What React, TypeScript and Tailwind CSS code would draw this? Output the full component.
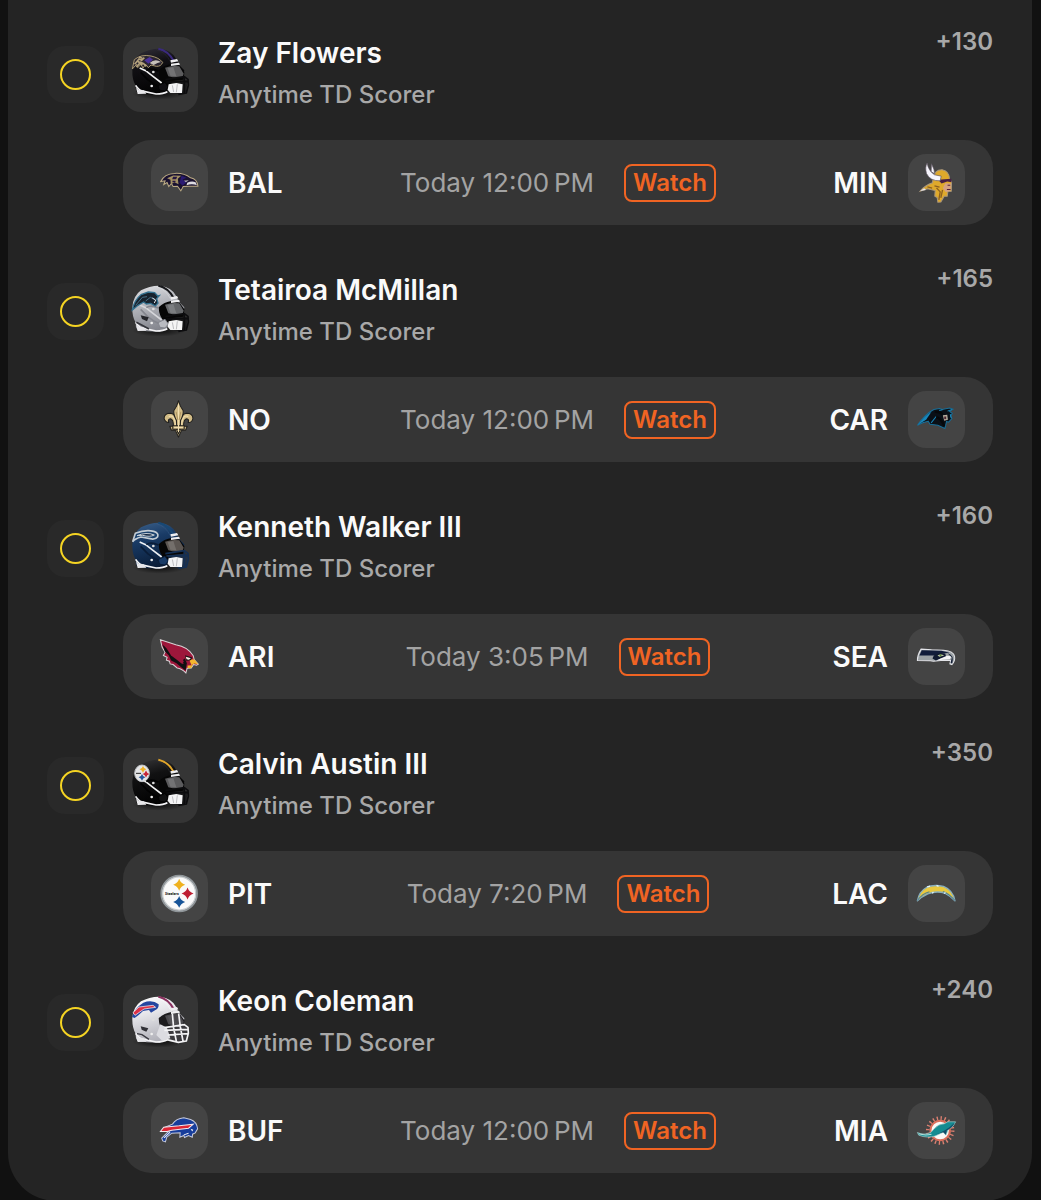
import React from "react";

type HelmetColors = {
  shell: string;
  light: string;
  dark: string;
  mask: string;
  strap: string;
  stripe: string;
  inner: string;
  visor: string;
};

const darkParts = { mask: "#0c0c0e", inner: "#060606", visor: "#5b5b5d" };

function Helmet({ id, colors, open = false, children }: { id: string; colors: HelmetColors; open?: boolean; children?: React.ReactNode }) {
  const c = colors;
  return (
    <svg viewBox="0 0 225 225" className="size-full" aria-hidden="true">
      <defs>
        <linearGradient id={id + "-g"} x1="0" y1="0" x2="0.3" y2="1">
          <stop offset="0" stopColor={c.light} />
          <stop offset="0.4" stopColor={c.shell} />
          <stop offset="1" stopColor={c.dark} />
        </linearGradient>
        <radialGradient id={id + "-s"}>
          <stop offset="0" stopColor="#000" stopOpacity="0.75" />
          <stop offset="1" stopColor="#000" stopOpacity="0" />
        </radialGradient>
      </defs>
      <ellipse cx="108" cy="170" rx="80" ry="18" fill={"url(#" + id + "-s)"} />
      <path d="M43 168 Q37 160 38 146 Q27 128 28 100 Q30 66 54 49 Q80 34 112 35 Q146 40 158 64 L168 84 L184 100 L180 124 L140 124 L132 165 L110 173 L72 172 Z" fill={"url(#" + id + "-g)"} />
      <path d="M106 35 Q136 41 152 72" fill="none" stroke={c.stripe} strokeWidth="6" />
      <path d="M100 38 Q128 45 142 74" fill="none" stroke={c.light} strokeWidth="2" opacity="0.7" />
      <path d="M107 100 Q122 84 148 80 L170 86 L184 106 L182 128 L150 132 L140 150 L126 144 Q108 130 107 100Z" fill={c.inner} />
      <path d="M126 92 Q148 84 169 88 L182 110 L178 121 Q154 124 136 118 Z" fill={c.visor} />
      <path d="M134 94 L151 90 L160 118 L142 116Z" fill="#fff" opacity={open ? "0.05" : "0.15"} />
      <path d="M142 70 L162 66 L166 73 L144 77Z M144 80 L168 77 L171 83 L144 87Z" fill="#eeeef0" />
      {!open && (
        <>
          <path d="M50 93 L68 101 L90 118 L116 138" fill="none" stroke={c.strap} strokeWidth="5" />
          <path d="M70 101 Q84 91 106 102 M53 106 L74 128 L94 142 L118 154" fill="none" stroke={c.dark} strokeWidth="5" />
        </>
      )}
      <path d="M38 145 Q48 162 66 164 L99 171 Q122 170 133 164" fill="none" stroke="#f3f3f5" strokeWidth="5" />
      <path d="M39 152 L48 159 L63 160 L70 170 L44 171Z" fill="#e7e7ea" />
      <circle cx="86" cy="147" r="4" fill="#eee" />
      <circle cx="113" cy="153" r="4" fill="#eee" />
      <circle cx="91" cy="105" r="4" fill="#ddd" />
      <path d="M105 146 L126 136 L136 150 L126 162 L111 160Z" fill={c.shell} stroke={c.dark} strokeWidth="3" />
      {open ? (
        <>
          <path d="M126 126 L192 122 L189 164 L166 173 L140 166Z" fill="#3a393d" />
          <path d="M112 118 L132 128 L142 160 L118 168 L100 150Z" fill="#dcdce1" />
          <path d="M124 128 L184 119 L195 127 L196 145 L190 168 L166 172 L132 164 M124 136 L195 133 M134 150 L195 146 M148 86 L152 130 L160 168 M167 86 L172 126 L180 168" fill="none" stroke={c.mask} strokeWidth="5" strokeLinejoin="round" />
        </>
      ) : (
        <>
          <path d="M134 132 L194 128 L190 164 L166 171 L140 165Z" fill={c.mask} opacity="0.6" />
          <path d="M137 142 L160 138 L179 142 L177 168 L142 168 L134 158Z" fill="#f4f4f5" />
          <path d="M148 145 L152 165 M163 142 L160 166" stroke="#a3a3a8" strokeWidth="2" />
          <path d="M127 128 L184 119 L195 127 L196 145 L190 168 L166 172 M130 135 L195 133 M184 119 L184 168" fill="none" stroke={c.mask} strokeWidth="5" strokeLinejoin="round" />
        </>
      )}
      {children}
    </svg>
  );
}

function Star({ x, y, s, fill }: { x: number; y: number; s: number; fill: string }) {
  return (
    <path transform={`translate(${x} ${y}) scale(${s})`} d="M0 -17 Q4 -4 17 0 Q4 4 0 17 Q-4 4 -17 0 Q-4 -4 0 -17Z" fill={fill} />
  );
}

const helmets: Record<string, React.ReactNode> = {
  BAL: (
    <Helmet id="bal" colors={{ ...darkParts, shell: "#111014", light: "#34313c", dark: "#030303", strap: "#f1f1f1", stripe: "#3a2a7c" }}>
      <path d="M28 96 L34 68 Q54 51 84 57 Q108 62 119 76 Q114 89 100 88 L84 84 L76 92 L68 82 L60 93 L54 82 L44 92 L41 82Z" fill="#2a2430" stroke="#a99871" strokeWidth="3" />
      <path d="M35 82 L48 66 L56 70 L64 62 M40 90 L53 76 L62 80 L70 88 M48 60 L58 64 M44 72 L58 84" fill="none" stroke="#b3a27c" strokeWidth="5" />
      <path d="M64 70 L80 60 L90 68 L76 80Z" fill="#4b319b" />
      <path d="M80 78 Q96 63 114 75 Q104 77 92 84Z" fill="#c6c0ba" />
    </Helmet>
  ),
  CAR: (
    <Helmet id="car" colors={{ ...darkParts, shell: "#b9bbc1", light: "#e4e5e8", dark: "#84868e", strap: "#d5d6da", stripe: "#17181b", visor: "#66686b" }}>
      <path d="M28 108 Q34 78 54 62 L76 54 L95 56 L104 66 L109 65 L101 74 L105 87 L97 96 L83 88 L70 90 L62 84 L45 94Z" fill="#17222d" stroke="#34708e" strokeWidth="4" />
      <path d="M38 94 L58 70 L72 68 M68 81 L82 70 L95 76" fill="none" stroke="#466f86" strokeWidth="3" />
      <path d="M88 72 L98 78 L94 87" fill="none" stroke="#e5e7eb" strokeWidth="3" />
      <path d="M53 124 L77 130 L72 142 L57 135Z" fill="#25262b" />
      <path d="M40 145 L56 153 L78 165" fill="none" stroke="#34353b" strokeWidth="5" />
    </Helmet>
  ),
  SEA: (
    <Helmet id="sea" colors={{ ...darkParts, shell: "#193b66", light: "#3c618a", dark: "#0a1d38", mask: "#142f54", strap: "#eceff3", stripe: "#174875", visor: "#5c5652" }}>
      <path d="M29 92 L37 67 Q67 55 92 61 Q108 66 104 77 Q97 87 81 83 L54 78 Q36 83 29 92Z" fill="#1b426e" stroke="#c3ccd4" strokeWidth="5" />
      <path d="M42 74 Q70 62 94 72 Q80 79 59 73Z" fill="#10233e" stroke="#c7d0d7" strokeWidth="3" />
    </Helmet>
  ),
  PIT: (
    <Helmet id="pit" colors={{ ...darkParts, shell: "#111112", light: "#38383a", dark: "#020202", strap: "#f3f3f3", stripe: "#e0a52b" }}>
      <ellipse cx="57" cy="76" rx="22" ry="25" fill="#e5e6e8" stroke="#c2c4c7" strokeWidth="3" />
      <Star x={60} y={64} s={0.6} fill="#efb32b" />
      <Star x={69} y={78} s={0.6} fill="#c72637" />
      <Star x={57} y={88} s={0.6} fill="#24559b" />
      <path d="M39 76h15" stroke="#222" strokeWidth="3" />
    </Helmet>
  ),
  BUF: (
    <Helmet id="buf" open colors={{ shell: "#e7e7eb", light: "#ffffff", dark: "#b1b1b9", mask: "#f3f3f5", strap: "#f0f0f3", stripe: "#8a315f", inner: "#1c1b1e", visor: "#4b4a4e" }}>
      <path d="M27 96 Q35 69 61 53 Q88 43 107 58 Q108 71 96 76 L84 83 L78 75 L60 78 L47 90 L35 99Z" fill="#2546a0" />
      <path d="M30 83 L48 66 L90 61 L98 67 L63 72 L36 91Z" fill="#dc3146" stroke="#fff" strokeWidth="2" />
      <path d="M53 124 L76 130 L70 140 L56 134Z" fill="#303036" />
      <path d="M42 146 L57 149 L78 163" fill="none" stroke="#3a3a41" strokeWidth="4" />
    </Helmet>
  ),
};

const logos: Record<string, React.ReactNode> = {
  BAL: (
    <>
      <path d="M29 82 Q40 59 70 58 Q98 56 118 71 Q138 75 140 96 L112 96 L96 97 L89 110 L79 96 L66 97 L61 88 L53 97 L48 85 L38 91 L42 80Z" fill="#1a1230" stroke="#bcab84" strokeWidth="3" />
      <path d="M48 72 L66 64 L90 65 L80 74 L82 90 L70 84 L59 91 L58 77Z" fill="#a39164" />
      <path d="M66 68 h12 l-3 7 h-12z M64 80h9v4h-9z" fill="#261742" />
      <path d="M91 65 L106 71 L94 76 L106 85 L94 94 L85 86Z" fill="#2a1a72" />
      <path d="M108 86 Q121 79 133 84 L137 93 Q122 88 106 93Z" fill="#dddbe1" />
      <path d="M98 80 L113 79 L104 83Z" fill="#ffffff" />
    </>
  ),
  MIN: (
    <>
      <path d="M75 72 Q80 46 102 47 Q123 51 124 75 L130 83 L129 111 L119 112 L117 126 L108 126 L98 143 L89 144 L87 130 L80 126 L81 109 L58 104 L36 111 Q50 94 73 86Z" fill="#dfa92b" stroke="#a9967b" strokeWidth="3" />
      <path d="M36 110 L48 102 L54 107Z" fill="#e8e8f0" />
      <path d="M90 77 L129 74 L130 84 L117 82 L100 88Z" fill="#482043" />
      <path d="M111 87 L128 88 L127 109 L113 114 L104 102Z" fill="#d5a182" />
      <path d="M118 93h8 M116 106h11" stroke="#53243e" strokeWidth="3" />
      <path d="M85 101 L96 113 L92 137 M103 107 L98 131 M79 95 L94 99 M58 98 L72 102" fill="none" stroke="#8c6020" strokeWidth="4" />
      <path d="M57 27 Q61 50 79 62 L99 66 L96 80 Q66 81 55 58 Q50 39 57 27Z M70 29 L77 45 L80 59 L69 53Z" fill="#f6f5fc" stroke="#5c525e" strokeWidth="2" />
    </>
  ),
  NO: (
    <>
      <g fill="#d2bc87" stroke="#201f1d" strokeWidth="3" strokeLinejoin="round">
        <path d="M78 94 Q74 67 58 66 Q39 66 39 82 Q42 94 53 94 Q49 84 58 83 Q67 85 67 105 L56 105 L61 117 L72 116 L82 137 L92 116 L103 117 L108 105 L97 105 Q97 85 106 83 Q115 84 111 94 Q123 94 125 82 Q125 66 106 66 Q90 67 86 94Z" />
        <path d="M82 29 Q86 46 96 59 Q97 72 88 88 L87 117 L82 128 L77 117 L76 88 Q67 72 68 59 Q78 46 82 29Z" />
        <path d="M65 104h34v10H65z" />
      </g>
      <path d="M82 39V122 M53 76 Q69 68 73 101 M111 76 Q95 68 91 101 M69 109h26" fill="none" stroke="#f2dfb0" strokeWidth="3" />
      <path d="M75 62 L80 86 M89 62 L84 86" stroke="#9c8150" strokeWidth="2" />
    </>
  ),
  CAR: (
    <>
      <path d="M28 102 Q52 68 77 55 L94 52 L102 55 L124 51 L134 54 L124 61 L132 67 L127 75 L131 82 L121 93 L115 91 L110 112 L89 102 L66 99 L60 90 Q44 93 28 102Z" fill="#0a1017" stroke="#186f99" strokeWidth="3" />
      <path d="M30 101 Q52 71 70 62 L54 86Z" fill="#1887bb" />
      <path d="M69 95 L84 76 M93 58 L103 56 M118 60 L131 55 M126 69 L129 81" fill="none" stroke="#1887bb" strokeWidth="3" />
      <path d="M80 62 Q94 61 103 70 M84 78 Q98 80 108 104" fill="none" stroke="#06080b" strokeWidth="7" />
      <path d="M104 72 L117 71 L119 86 L108 89Z" fill="#b8ad9d" />
      <path d="M108 76h6v8h-6z" fill="#4c2630" />
    </>
  ),
  ARI: (
    <>
      <path d="M28 35 L74 50 Q110 56 126 83 L129 95 L141 108 L136 111 L127 109 L120 119 L108 120 L104 134 Q91 120 78 119 L66 109 L57 107 L55 99 L46 96 L48 87 L37 82 L42 72 L33 57Z" fill="#9d173b" stroke="#d8d4d6" strokeWidth="3" />
      <path d="M34 49 L41 69 L53 81 L60 97 L76 105 L91 118 L103 127 L107 105 L101 91 L93 97 L98 107 L86 101 L78 88 L66 82 L58 66 L44 58Z" fill="#111012" />
      <path d="M34 42 L68 54 L86 74 L97 99 L94 108 L77 95 L60 82Z" fill="#9d173b" />
      <path d="M102 81 L123 88 L119 96 L105 98Z" fill="#161315" />
      <path d="M104 86 L119 90 L113 95 L106 93Z" fill="#fff2e7" />
      <path d="M115 98 Q124 89 132 96 L141 108 L129 106 L121 111Z M109 112 L124 111 L120 120 L109 119Z" fill="#f5b62f" />
    </>
  ),
  SEA: (
    <>
      <path d="M39 63 L70 65 L106 66 Q136 68 139 85 Q141 98 131 109 L125 107 L127 97 L98 97 L76 99 L66 98 L28 97 Q28 80 39 63Z" fill="#9ba1a4" stroke="#e3e4e9" strokeWidth="3" />
      <path d="M41 66 L100 68 L124 74 L98 77 L78 82 L34 82Z" fill="#111c3a" />
      <path d="M77 82 Q90 71 111 76 L114 87 L97 91 L83 97 L73 91Z" fill="#101a31" />
      <path d="M88 82 Q98 76 108 82 L94 86Z" fill="#c8cfaa" />
      <circle cx="97" cy="81" r="3" fill="#5a8a36" />
      <path d="M86 97 L99 90 L116 83 L130 84 L125 93 L103 95Z" fill="#f5f5f7" />
      <path d="M118 75 Q138 79 132 106 L127 104 L131 88Z" fill="#111c34" />
    </>
  ),
  PIT: (
    <>
      <circle cx="84" cy="85" r="53" fill="#fafafa" stroke="#8f9599" strokeWidth="6" />
      <circle cx="84" cy="85" r="49" fill="none" stroke="#c5c9cb" strokeWidth="3" />
      <Star x={84} y={59} s={1.05} fill="#efb11e" />
      <Star x={109} y={85} s={1.05} fill="#be1e32" />
      <Star x={84} y={110} s={1.05} fill="#175498" />
      <text x="42" y="88" fontSize="10" fontWeight="800" fill="#202020">Steelers</text>
    </>
  ),
  LAC: (
    <>
      <path d="M28 107 Q33 79 55 67 Q75 57 106 64 Q134 75 140 107 Q128 93 110 84 Q85 76 59 86 Q41 94 28 107Z" fill="#e9c93f" stroke="#87aebf" strokeWidth="4" strokeLinejoin="round" />
      <path d="M28 106 Q43 85 64 80 M140 106 Q122 85 104 79" fill="none" stroke="#54828f" strokeWidth="3" />
      <path d="M57 65 L66 63 M85 61 L91 64 M72 84 L76 81 M107 85 L112 82" stroke="#e3f4f7" strokeWidth="4" />
    </>
  ),
  BUF: (
    <>
      <path d="M40 76 L64 66 Q75 49 98 47 L118 52 Q137 59 139 80 L132 92 L124 96 L123 105 L112 100 L100 106 L98 100 L86 105 L87 92 L62 93 L47 105 L43 119 L35 116 L32 108 L47 93 L58 84Z" fill="#173d9b" stroke="#c6cadb" strokeWidth="3" />
      <path d="M28 88 L38 75 L84 71 L126 66 L112 78 L62 84 L48 88Z" fill="#dc2535" stroke="#f1e9ee" strokeWidth="3" />
      <path d="M57 90 L39 107 M98 98 L112 93" fill="none" stroke="#eef0f7" strokeWidth="3" />
      <path d="M118 80 l8 3 -3 5z" fill="#ffffff" />
    </>
  ),
  MIA: (
    <>
      <circle cx="96" cy="85" r="37" fill="none" stroke="#dd8071" strokeWidth="11" strokeDasharray="4 7.62" />
      <circle cx="96" cy="85" r="29" fill="#faf8f7" stroke="#dc6f5c" strokeWidth="6" />
      <path d="M28 91 Q48 100 68 91 L78 80 Q91 65 108 65 L119 59 L142 59 Q138 73 120 82 L113 99 L105 90 L91 97 Q72 108 45 103 L32 99Z" fill="#168b91" stroke="#a9cfcd" strokeWidth="2" />
      <path d="M80 97 Q111 89 140 61 Q131 78 115 85 L113 98 L105 90Z" fill="#164d69" />
      <path d="M32 95 Q51 101 70 96" fill="none" stroke="#b3e1dc" strokeWidth="3" />
    </>
  ),
};

type Leg = { player: string; odds: string; helmet: string; away: string; home: string; time: string };

const legs: Leg[] = [
  { player: "Zay Flowers", odds: "+130", helmet: "BAL", away: "BAL", home: "MIN", time: "12:00\u202fPM" },
  { player: "Tetairoa McMillan", odds: "+165", helmet: "CAR", away: "NO", home: "CAR", time: "12:00\u202fPM" },
  { player: "Kenneth Walker III", odds: "+160", helmet: "SEA", away: "ARI", home: "SEA", time: "3:05\u202fPM" },
  { player: "Calvin Austin III", odds: "+350", helmet: "PIT", away: "PIT", home: "LAC", time: "7:20\u202fPM" },
  { player: "Keon Coleman", odds: "+240", helmet: "BUF", away: "BUF", home: "MIA", time: "12:00\u202fPM" },
];

function TeamLogo({ team }: { team: string }) {
  return (
    <div className="size-[57px] shrink-0 rounded-[18px] bg-[#444444]">
      <svg viewBox="0 0 170 170" className="size-full" aria-hidden="true">{logos[team]}</svg>
    </div>
  );
}

function LegRow({ leg }: { leg: Leg }) {
  return (
    <li>
      <div className="flex items-center">
        <div className="flex size-[57px] shrink-0 items-center justify-center rounded-[18px] bg-[#292929]">
          <span role="img" aria-label="Pending" className="size-[31px] rounded-full border-2 border-[#f5d423]" />
        </div>
        <div className="ml-[19px] size-[75px] shrink-0 overflow-hidden rounded-[18px] bg-[#353535]">{helmets[leg.helmet]}</div>
        <div className="ml-5 min-w-0 flex-1">
          <h2 className="text-[28px] leading-[41px] font-semibold text-[#fafafa]">{leg.player}</h2>
          <p className="text-2xl leading-[41px] font-medium text-[#a8a8a8]">Anytime TD Scorer</p>
        </div>
        <span className="-mt-[5px] self-start text-2xl leading-7 font-semibold text-[#a8a8a8]">{leg.odds}</span>
      </div>
      <div className="mt-[25px] ml-[76px] grid h-[85px] grid-cols-[1fr_auto_1fr] items-center rounded-[28px] bg-[#353535] px-7">
        <div className="flex items-center gap-5 text-[28px] leading-9 font-semibold text-[#fafafa]">
          <TeamLogo team={leg.away} />
          <span>{leg.away}</span>
        </div>
        <div className="flex items-center gap-[30px]">
          <time className="text-[26px] leading-8 text-[#a3a3a3]">Today {leg.time}</time>
          <button type="button" className="rounded-lg border-2 border-[#f06423] px-[7px] py-px text-2xl leading-8 font-semibold text-[#f06423]">Watch</button>
        </div>
        <div className="flex items-center justify-end gap-5 text-[28px] leading-9 font-semibold text-[#fafafa]">
          <span>{leg.home}</span>
          <TeamLogo team={leg.home} />
        </div>
      </div>
    </li>
  );
}

export default function App() {
  return (
    <main className="min-h-screen bg-[#111111] pr-[9px] pl-2 font-[Inter,sans-serif]">
      <section className="rounded-b-[48px] bg-[#242424] px-[39px] pt-[33px] pb-7">
        <ul className="flex flex-col gap-[45px]">
          {legs.map((leg) => (
            <LegRow key={leg.player} leg={leg} />
          ))}
        </ul>
      </section>
    </main>
  );
}
